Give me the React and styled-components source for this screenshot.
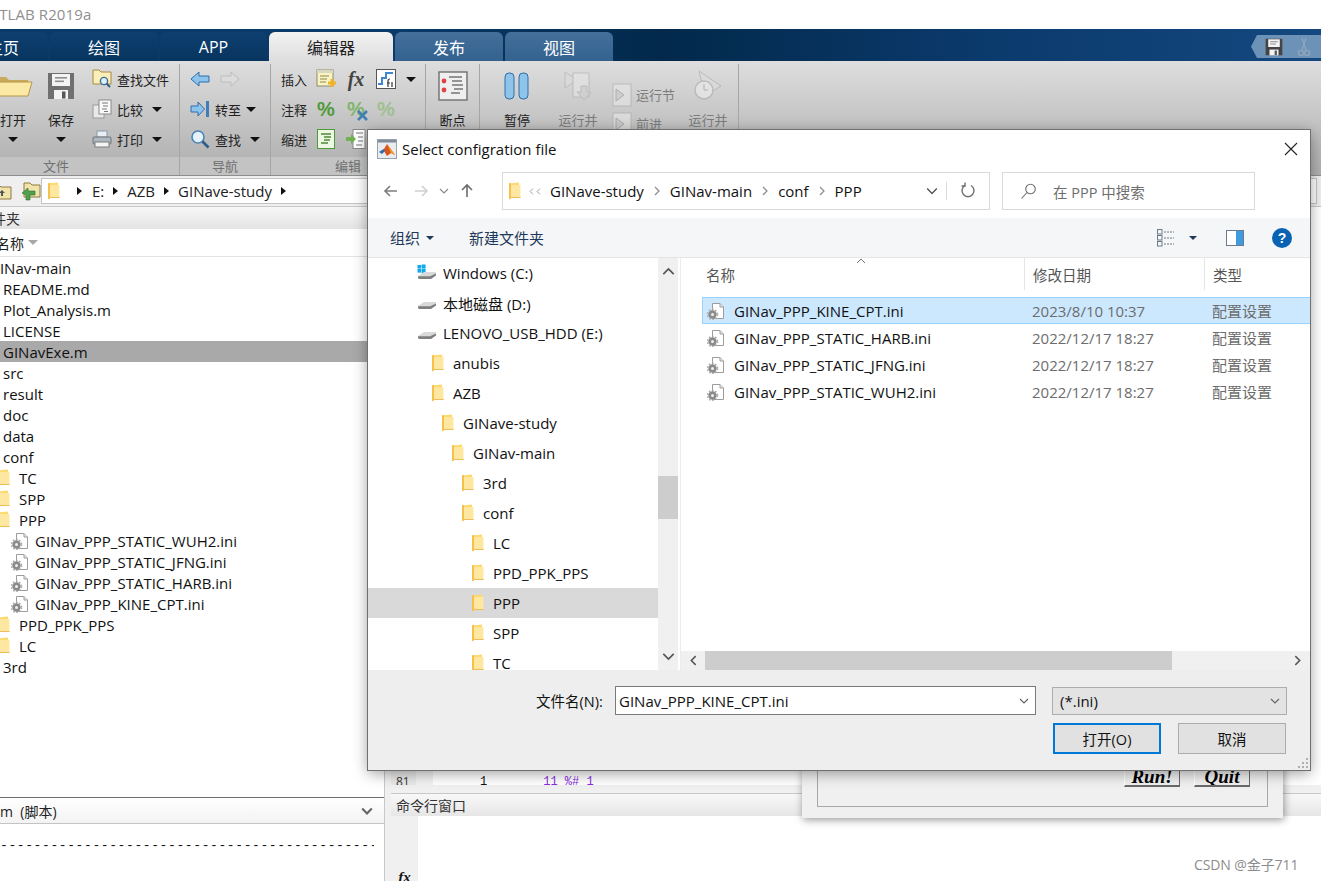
import React from "react";
import styled, { createGlobalStyle } from "styled-components";

const GlobalStyle = createGlobalStyle`
  html, body { margin: 0; padding: 0; background: #fff; }
  body { font-family: "Open Sans", "Noto Sans CJK SC", sans-serif; }
  * { box-sizing: border-box; }
`;

const Page = styled.div`
  position: relative;
  width: 1321px;
  height: 881px;
  overflow: hidden;
  display: flex;
  flex-direction: column;
  background: #fff;
  color: #111;
`;

/* ---------- matlab title + tabs ---------- */
const TitleBar = styled.div`
  height: 29px;
  flex: none;
  background: #fff;
  color: #8f8f8f;
  font-size: 15px;
  line-height: 29px;
  white-space: nowrap;
  overflow: hidden;
`;
const TitleText = styled.span`
  display: inline-block;
  margin-left: -24px;
  letter-spacing: 0.1px;
`;

const TabBar = styled.div`
  height: 32px;
  flex: none;
  display: flex;
  align-items: flex-end;
  gap: 2px;
  background: linear-gradient(90deg, #0a3a69 0%, #0a3a69 30%, #02294b 50%, #0b3a6d 75%, #14487f 100%);
  position: relative;
`;
const Tab = styled.div`
  width: ${(p) => p.$w}px;
  margin-left: ${(p) => p.$ml || 0}px;
  height: 29px;
  border-radius: 6px 6px 0 0;
  display: flex;
  align-items: center;
  justify-content: center;
  font-size: 16px;
  color: ${(p) => (p.$active ? "#222" : "#fff")};
  background: ${(p) =>
    p.$active
      ? "linear-gradient(#f2f2f2, #dedede)"
      : p.$light
      ? "linear-gradient(#44709a, #33628f)"
      : "linear-gradient(#0d3f70, #08355f)"};
  white-space: nowrap;
`;
const QuickAccess = styled.div`
  position: absolute;
  right: 0;
  top: 6px;
  width: 70px;
  height: 23px;
  display: flex;
  align-items: center;
  gap: 14px;
  padding-left: 14px;
  background: #6d92b8;
  clip-path: polygon(6px 0, 100% 0, 100% 100%, 6px 100%, 0 50%);
`;

/* ---------- ribbon ---------- */
const Ribbon = styled.div`
  height: 115px;
  flex: none;
  display: flex;
  background: linear-gradient(#dedede, #b4b4b4 85%, #b0b0b0);
  border-bottom: 1px solid #8e8e8e;
  font-size: 13px;
  color: #222;
`;
const Group = styled.div`
  width: ${(p) => p.$w}px;
  margin-left: ${(p) => p.$ml || 0}px;
  flex: none;
  display: flex;
  flex-direction: column;
  margin-top: 3px;
  border-right: 1px solid #a6a6a6;
`;
const GroupBody = styled.div`
  height: 93px;
  display: flex;
  padding-left: ${(p) => p.$pl || 0}px;
`;
const GroupLabel = styled.div`
  height: 18px;
  line-height: 18px;
  text-align: center;
  color: #707070;
  font-size: 13px;
  background: #c3c3c3;
`;
const TallButton = styled.div`
  width: ${(p) => p.$w}px;
  margin-left: ${(p) => p.$ml || 0}px;
  flex: none;
  display: flex;
  flex-direction: column;
  align-items: center;
  padding-top: 6px;
  color: ${(p) => (p.$off ? "#7c7c7c" : "#222")};
`;
const TallIcon = styled.div`
  height: 32px;
  display: flex;
  align-items: center;
`;
const TallLabel = styled.div`
  margin-top: 8px;
  line-height: 20px;
  white-space: nowrap;
`;
const Caret = styled.span`
  display: inline-block;
  width: 0;
  height: 0;
  flex: none;
  margin-left: ${(p) => p.$ml || 0}px;
  margin-top: ${(p) => p.$mt || 0}px;
  border-left: 5px solid transparent;
  border-right: 5px solid transparent;
  border-top: 5px solid ${(p) => p.$color || "#111"};
`;
const RowStack = styled.div`
  margin-left: ${(p) => p.$ml || 0}px;
  padding-top: ${(p) => p.$pt || 0}px;
  display: grid;
  grid-auto-rows: ${(p) => p.$row || 30}px;
  flex: none;
`;
const RibbonRow = styled.div`
  display: flex;
  align-items: center;
  gap: ${(p) => p.$gap || 5}px;
  white-space: nowrap;
  color: ${(p) => (p.$off ? "#7c7c7c" : "#222")};
`;
const EditGrid = styled.div`
  padding-top: 0;
  display: grid;
  grid-template-columns: 25px 20px 20px 20px 10px;
  grid-auto-rows: 30px;
  column-gap: 10px;
  align-items: center;
  justify-items: center;
  & > span:first-child, & > .lead { justify-self: start; }
`;
const EditLabel = styled.span`
  justify-self: start;
  white-space: nowrap;
`;

/* ---------- address bar ---------- */
const AddressBar = styled.div`
  height: 31px;
  flex: none;
  display: flex;
  align-items: center;
  background: #efefef;
  border-bottom: 1px solid #c8c8c8;
  padding-right: 4px;
`;
const AddressIcons = styled.div`
  width: 49px;
  display: flex;
  align-items: center;
  gap: 9px;
  margin-left: -8px;
  flex: none;
`;
const AddressField = styled.div`
  flex: 1;
  height: 26px;
  background: #fff;
  border: 1px solid #c4c4c4;
  display: flex;
  align-items: center;
  padding-left: 5px;
  font-size: 15px;
  color: #222;
`;
const CrumbArrow = styled.span`
  width: 0;
  height: 0;
  flex: none;
  margin: ${(p) => p.$m || "0 9px"};
  border-top: 4.5px solid transparent;
  border-bottom: 4.5px solid transparent;
  border-left: 5px solid #111;
`;

/* ---------- workspace ---------- */
const Workspace = styled.div`
  flex: 1;
  display: flex;
  min-height: 0;
`;
const LeftColumn = styled.div`
  width: 385px;
  flex: none;
  display: flex;
  flex-direction: column;
  border-right: 1px solid #c8c8c8;
`;
const PaneHeader = styled.div`
  height: 22px;
  flex: none;
  display: flex;
  align-items: center;
  justify-content: space-between;
  padding-right: 12px;
  background: linear-gradient(#f7f7f7, #e4e4e4);
  font-size: 14px;
  color: #333;
  overflow: hidden;
  white-space: nowrap;
`;
const ClippedTitle = styled.span`
  margin-left: ${(p) => p.$ml}px;
`;
const ColumnHead = styled.div`
  height: 28px;
  flex: none;
  display: flex;
  align-items: center;
  gap: 4px;
  background: #fff;
  border-bottom: 1px solid #e3e3e3;
  font-size: 14px;
  color: #222;
  overflow: hidden;
  white-space: nowrap;
`;
const FileList = styled.div`
  flex: 1;
  overflow: hidden;
  background: #fff;
`;
const FileRow = styled.div`
  height: 21px;
  display: flex;
  align-items: center;
  gap: ${(p) => p.$gap || 0}px;
  padding-left: ${(p) => p.$pl || 0}px;
  font-size: 15px;
  white-space: nowrap;
  letter-spacing: ${(p) => (p.$gap ? "0" : "0")};
  background: ${(p) => (p.$selected ? "#a9a9a9" : "transparent")};
  color: #111;
`;
const DetailPane = styled.div`
  height: 84px;
  flex: none;
  display: flex;
  flex-direction: column;
  border-top: 1px solid #6e6e6e;
  background: #fff;
`;
const DetailHead = styled.div`
  height: 26px;
  flex: none;
  display: flex;
  align-items: center;
  justify-content: space-between;
  padding-right: 11px;
  background: linear-gradient(#fff, #f3f3f3);
  border-bottom: 1px solid #c4c4c4;
  font-size: 14px;
  white-space: nowrap;
  overflow: hidden;
  color: #222;
`;
const DashLine = styled.div`
  margin-top: 13px;
  width: 374px;
  overflow: hidden;
  white-space: nowrap;
  font-size: 13px;
  line-height: 18px;
  letter-spacing: 0.6px;
  font-family: "Liberation Mono", monospace;
`;

const RightColumn = styled.div`
  flex: 1;
  display: flex;
  flex-direction: column;
  min-width: 0;
  padding-left: 6px;
  background: #f0f0f0;
`;
const Editor = styled.div`
  flex: 1;
  min-height: 0;
  display: flex;
  background: #fff;
  border-bottom: 8px solid #f0f0f0;
  overflow: hidden;
`;
const EditorLineNos = styled.div`
  width: 25px;
  flex: none;
  background: #e8e8e8;
  display: flex;
  flex-direction: column;
  justify-content: flex-end;
  padding-left: 5px;
  font-size: 12px;
  line-height: 6px;
  color: #333;
  overflow: hidden;
`;
const EditorFold = styled.div`
  width: 17px;
  flex: none;
  background: #f2f2f2;
`;
const EditorCode = styled.div`
  flex: 1;
  display: flex;
  align-items: flex-end;
  font-family: "Liberation Mono", monospace;
  font-size: 12px;
  line-height: 6px;
  overflow: hidden;
  padding-left: 47px;
  gap: 56px;
`;
const CodeTail = styled.span`
  color: #8a2be2;
`;
const CommandWindow = styled.div`
  height: 88px;
  flex: none;
  display: flex;
  flex-direction: column;
  background: #fff;
  border-top: 1px solid #c8c8c8;
`;
const CommandHead = styled.div`
  height: 22px;
  flex: none;
  display: flex;
  align-items: center;
  padding-left: 5px;
  font-size: 14px;
  color: #333;
  background: linear-gradient(#f8f8f8, #e6e6e6);
`;
const CommandBody = styled.div`
  flex: 1;
  display: flex;
`;
const CommandGutter = styled.div`
  width: 27px;
  background: #f0f0f0;
  display: flex;
  align-items: flex-end;
  justify-content: center;
  font-family: "Liberation Serif", serif;
  font-style: italic;
  font-weight: 700;
  font-size: 15px;
  line-height: 8px;
  overflow: hidden;
`;

/* ---------- figure window behind the dialog ---------- */
const FigureWindow = styled.div`
  position: absolute;
  left: 802px;
  top: 700px;
  width: 481px;
  height: 118px;
  background: #f0f0f0;
  box-shadow: 1px 2px 8px rgba(0, 0, 0, 0.4);
  padding: 0 15px 11px;
  display: flex;
`;
const FigurePanel = styled.div`
  flex: 1;
  border: 1px solid #a8a8a8;
  border-top: none;
  display: flex;
  align-items: flex-end;
  justify-content: flex-end;
  gap: 14px;
  padding: 0 17px 19px 0;
`;
const FigureButton = styled.div`
  width: 56px;
  height: 26px;
  background: #f0f0f0;
  border: 1px solid #fff;
  border-right-color: #696969;
  border-bottom: 2px solid #696969;
  font-family: "Liberation Serif", serif;
  font-weight: 700;
  font-style: italic;
  font-size: 19px;
  line-height: 30px;
  text-align: center;
  color: #000;
  overflow: hidden;
`;

/* ---------- file dialog ---------- */
const Dialog = styled.div`
  position: absolute;
  left: 368px;
  top: 130px;
  width: 942px;
  height: 640px;
  background: #fff;
  box-shadow: 0 0 0 1px #6f6f6f, 0 3px 14px rgba(0, 0, 0, 0.4);
  display: flex;
  flex-direction: column;
  z-index: 5;
`;
const DialogTitle = styled.div`
  height: 38px;
  flex: none;
  display: flex;
  align-items: center;
  padding: 0 12px 0 9px;
  gap: 5px;
  font-size: 15px;
  color: #111;
`;
const DialogTitleText = styled.div`
  flex: 1;
`;
const NavBar = styled.div`
  height: 50px;
  flex: none;
  display: flex;
  align-items: flex-start;
  padding-top: 4px;
`;
const NavIcons = styled.div`
  width: 134px;
  height: 38px;
  flex: none;
  display: flex;
  align-items: center;
  padding-left: 15px;
`;
const PathBox = styled.div`
  width: 488px;
  height: 38px;
  flex: none;
  display: flex;
  align-items: center;
  border: 1px solid #d9d9d9;
  font-size: 15px;
  color: #111;
`;
const PathCrumbs = styled.div`
  flex: 1;
  display: flex;
  align-items: center;
  padding-left: 5px;
  white-space: nowrap;
`;
const PathSep = styled.span`
  margin: ${(p) => p.$m || "0 8px"};
  display: inline-flex;
`;
const PathEnd = styled.div`
  width: 43px;
  height: 100%;
  border-left: 1px solid #d9d9d9;
  display: flex;
  align-items: center;
  justify-content: center;
  flex: none;
`;
const SearchBox = styled.div`
  margin-left: 12px;
  width: 253px;
  height: 38px;
  flex: none;
  display: flex;
  align-items: center;
  gap: 16px;
  padding-left: 17px;
  border: 1px solid #d9d9d9;
  font-size: 14.5px;
  color: #6d6d6d;
`;
const ToolBar = styled.div`
  height: 40px;
  flex: none;
  display: flex;
  align-items: center;
  background: #f5f6f7;
  border-bottom: 1px solid #e5e5e5;
  padding-left: 22px;
  font-size: 15px;
  color: #1e395b;
`;
const ToolAction = styled.div`
  display: flex;
  align-items: center;
  gap: 6px;
  margin-right: ${(p) => p.$mr || 0}px;
  white-space: nowrap;
`;
const ToolRight = styled.div`
  margin-left: auto;
  display: flex;
  align-items: center;
  padding-right: 18px;
`;
const DialogBody = styled.div`
  height: 412px;
  flex: none;
  display: flex;
`;
const TreePane = styled.div`
  width: 310px;
  flex: none;
  display: flex;
`;
const TreeRows = styled.div`
  width: 290px;
  flex: none;
  overflow: hidden;
`;
const TreeRow = styled.div`
  height: 30px;
  display: flex;
  align-items: center;
  gap: ${(p) => p.$gap || 9}px;
  padding-left: ${(p) => p.$pl}px;
  font-size: 15px;
  white-space: nowrap;
  background: ${(p) => (p.$selected ? "#d9d9d9" : "transparent")};
  color: #111;
`;
const VScroll = styled.div`
  width: 20px;
  flex: none;
  background: #f0f0f0;
  display: flex;
  flex-direction: column;
  align-items: center;
  justify-content: space-between;
  position: relative;
  padding: 7px 0;
`;
const VThumb = styled.div`
  position: absolute;
  top: 218px;
  left: 0;
  width: 20px;
  height: 43px;
  background: #cdcdcd;
`;
const ListPane = styled.div`
  flex: 1;
  display: flex;
  flex-direction: column;
  border-left: 1px solid #ececec;
  margin-left: 2px;
  min-width: 0;
`;
const ListHead = styled.div`
  height: 32px;
  flex: none;
  display: grid;
  grid-template-columns: 343px 180px 1fr;
  font-size: 14.5px;
  color: #555;
  position: relative;
`;
const HeadCell = styled.div`
  display: flex;
  align-items: center;
  padding-left: ${(p) => p.$pl || 8}px;
  border-left: ${(p) => (p.$first ? "none" : "1px solid #e5e5e5")};
`;
const SortMark = styled.svg`
  position: absolute;
  left: 175px;
  top: 0;
`;
const ListRows = styled.div`
  flex: 1;
  padding: 7px 0 0 21px;
  overflow: hidden;
`;
const ListRow = styled.div`
  height: 27px;
  display: grid;
  grid-template-columns: 321px 180px 1fr;
  align-items: center;
  font-size: 15px;
  background: ${(p) => (p.$selected ? "#cce8ff" : "transparent")};
  border: 1px solid ${(p) => (p.$selected ? "#99d1ff" : "transparent")};
  border-right: none;
  white-space: nowrap;
`;
const NameCell = styled.div`
  display: flex;
  align-items: center;
  gap: 9px;
  padding-left: 4px;
  color: #111;
`;
const DimCell = styled.div`
  padding-left: 8px;
  color: #6d6d6d;
`;
const HScroll = styled.div`
  height: 19px;
  flex: none;
  background: #f0f0f0;
  display: flex;
  align-items: center;
  justify-content: space-between;
  padding: 0 7px;
  position: relative;
`;
const HThumb = styled.div`
  position: absolute;
  left: 24px;
  top: 0;
  width: 467px;
  height: 19px;
  background: #cdcdcd;
`;
const Footer = styled.div`
  flex: 1;
  background: #eeeeee;
  display: flex;
  flex-direction: column;
  padding-top: 16px;
  position: relative;
`;
const FooterRow = styled.div`
  display: flex;
  align-items: center;
  height: 29px;
  font-size: 14.5px;
`;
const FooterLabel = styled.div`
  margin-left: 168px;
  width: 79px;
  white-space: nowrap;
`;
const NameInput = styled.div`
  width: 421px;
  height: 29px;
  background: #fff;
  border: 1px solid #7a7a7a;
  display: flex;
  align-items: center;
  justify-content: space-between;
  padding: 0 6px 0 3px;
  font-size: 15px;
`;
const TypeSelect = styled.div`
  margin-left: 16px;
  width: 235px;
  height: 28px;
  background: #e3e3e3;
  border: 1px solid #adadad;
  display: flex;
  align-items: center;
  justify-content: space-between;
  padding: 0 6px 0 7px;
  font-size: 15px;
`;
const ButtonRow = styled.div`
  margin-top: 8px;
  display: flex;
  gap: 17px;
  padding-left: 685px;
`;
const DialogButton = styled.div`
  width: 108px;
  height: 31px;
  background: #e1e1e1;
  border: ${(p) => (p.$primary ? "2px solid #0078d7" : "1px solid #adadad")};
  display: flex;
  align-items: center;
  justify-content: center;
  font-size: 14.5px;
  color: #111;
`;
const Grip = styled.svg`
  position: absolute;
  right: 1px;
  bottom: 1px;
`;
const Watermark = styled.div`
  position: absolute;
  left: 1194px;
  top: 856px;
  font-size: 14px;
  line-height: 18px;
  color: #8c8c8c;
  letter-spacing: -0.1px;
  z-index: 6;
`;

/* ---------- drawn icons ---------- */
const TreeFolder = () => (
  <svg width="13" height="18" viewBox="0 0 13 18">
    <path d="M1 1.5 L11 0.5 V15 H1 Z" fill="#fdd96f" />
    <path d="M1 1.5 L3 0.8 V16.5 L1 17.5 Z" fill="#f6c14a" />
    <path d="M3 3 H12.5 V16 H3 Z" fill="#fee7a0" />
    <path d="M3 16 H12.5 V15 H3 Z" fill="#eebf58" />
  </svg>
);
const Clip = styled.span`
  display: inline-flex;
  margin-left: ${(p) => p.$ml}px;
  flex: none;
`;
const IniIcon = () => (
  <svg width="18" height="18" viewBox="0 0 18 18">
    <path d="M5.5 1.5 H13 L16.5 5 V16.5 H5.5 Z" fill="#fff" stroke="#9c9c9c" />
    <path d="M13 1.5 V5 H16.5" fill="#e8e8e8" stroke="#9c9c9c" />
    <circle cx="5.5" cy="12.5" r="4.2" fill="#8b8b8b" />
    <circle cx="5.5" cy="12.5" r="5" fill="none" stroke="#a8a8a8" strokeWidth="1.6" strokeDasharray="1.6 1.6" />
    <circle cx="5.5" cy="12.5" r="1.5" fill="#efefef" />
  </svg>
);
const DriveIcon = ({ windows }) => (
  <svg width="20" height="18" viewBox="0 0 20 18">
    {windows && (
      <g fill="#12a8ee">
        <rect x="0.5" y="1" width="3.6" height="3.6" />
        <rect x="4.6" y="0.5" width="4" height="4.1" />
        <rect x="0.5" y="5" width="3.6" height="3.6" />
        <rect x="4.6" y="5" width="4" height="4.1" />
      </g>
    )}
    <path d="M1 12 L7 8 H19 V11 L14 14.5 H2 Z" fill="#d9d9d9" />
    <path d="M1 12.2 H13 L19 9.5 V11.5 L14 15 H2 L1 14 Z" fill="#7f7f7f" />
  </svg>
);
const BigFolder = () => (
  <svg width="42" height="24" viewBox="0 0 42 24">
    <path d="M1 3 H14 L17 6 H36 V22 H1 Z" fill="#c9a95a" />
    <path d="M3 8 H40 L36 22 H1 Z" fill="#fbe9a6" stroke="#b79749" />
  </svg>
);
const SaveIcon = ({ size = 28, body = "#707070" }) => (
  <svg width={size} height={size} viewBox="0 0 28 28">
    <path d="M1 1 H27 V27 H1 Z" fill={body} />
    <rect x="5" y="2" width="18" height="12" fill="#f3f3f3" />
    <rect x="8" y="5" width="12" height="1.6" fill="#8f8f8f" />
    <rect x="8" y="8.5" width="9" height="1.6" fill="#8f8f8f" />
    <rect x="7" y="18" width="14" height="9" fill="#f3f3f3" />
    <rect x="15" y="19.5" width="3.5" height="7" fill="#555" />
  </svg>
);
const FindFileIcon = () => (
  <svg width="20" height="20" viewBox="0 0 20 20">
    <path d="M1 1 H7 L9 3 H19 V15 H1 Z" fill="#fbeeb8" stroke="#a8893f" />
    <circle cx="12" cy="12" r="3.6" fill="#dff0fb" stroke="#3a6d98" strokeWidth="1.4" />
    <path d="M14.6 14.6 L18 18" stroke="#2f5d85" strokeWidth="2" />
  </svg>
);
const CompareIcon = () => (
  <svg width="20" height="20" viewBox="0 0 20 20">
    <rect x="1" y="6" width="11" height="13" fill="#e9e9e9" stroke="#9a9a9a" />
    <rect x="7" y="1" width="12" height="14" fill="#fafafa" stroke="#8a8a8a" />
    <path d="M10 4 H16 M11 7 H16 M10 10 H15 M12 12.5 H16" stroke="#777" strokeWidth="1.1" />
  </svg>
);
const PrintIcon = () => (
  <svg width="20" height="18" viewBox="0 0 20 18">
    <rect x="5" y="1" width="10" height="6" fill="#e7eef5" stroke="#8e9aa6" />
    <rect x="1" y="7" width="18" height="7" rx="1" fill="#aeb6be" stroke="#6e757c" />
    <rect x="3" y="12" width="14" height="5" fill="#f4f4f4" stroke="#7d7d7d" />
  </svg>
);
const BlockArrow = ({ flip, color = "#8cc4ee", edge = "#2f6fa8" }) => (
  <svg width="20" height="16" viewBox="0 0 20 16" style={flip ? { transform: "scaleX(-1)" } : undefined}>
    <path d="M1 8 L9 1 V5 H19 V11 H9 V15 Z" fill={color} stroke={edge} />
  </svg>
);
const GotoIcon = () => (
  <svg width="20" height="18" viewBox="0 0 20 18">
    <path d="M1 6 H8 V2 L14.5 9 L8 16 V12 H1 Z" fill="#8cc4ee" stroke="#2f6fa8" />
    <rect x="16" y="1" width="3" height="16" fill="#3f7fb6" />
  </svg>
);
const LensIcon = () => (
  <svg width="20" height="20" viewBox="0 0 20 20">
    <circle cx="8" cy="8" r="6" fill="#e5f2fb" stroke="#4a85b5" strokeWidth="1.6" />
    <path d="M12.5 12.5 L18.5 18.5" stroke="#2f5d85" strokeWidth="2.6" />
  </svg>
);
const InsertIcon = () => (
  <svg width="20" height="20" viewBox="0 0 20 20">
    <rect x="1" y="1" width="16" height="16" fill="#fbf3c4" stroke="#8c8c6c" />
    <rect x="1" y="1" width="16" height="3" fill="#d8d8c0" />
    <path d="M4 7 H13 M4 10 H11 M4 13 H10" stroke="#8a8a4a" strokeWidth="1.2" />
    <path d="M16 10 V18 M12 14 H20" stroke="#f0b429" strokeWidth="3" />
  </svg>
);
const FxGlyph = styled.span`
  font-family: "Liberation Serif", serif;
  font-style: italic;
  font-weight: 700;
  font-size: 20px;
  color: #444;
  line-height: 20px;
`;
const FiIcon = () => (
  <svg width="20" height="20" viewBox="0 0 20 20">
    <rect x="0.5" y="0.5" width="19" height="19" fill="#fff" stroke="#555" />
    <path d="M2 15 H6 V9 H10 V4 H17" fill="none" stroke="#3f87d0" strokeWidth="2" />
    <path d="M12 18 V12 Q12 10 14 10 M11 14 H14 M16 13 V18" fill="none" stroke="#333" strokeWidth="1.2" />
  </svg>
);
const PercentGlyph = styled.span`
  font-family: "Liberation Sans", sans-serif;
  font-weight: 700;
  font-size: 20px;
  line-height: 20px;
  color: ${(p) => p.$color || "#4f9a3a"};
  position: relative;
  display: inline-block;
`;
const PercentBadge = styled.svg`
  position: absolute;
  right: -3px;
  bottom: -2px;
`;
const IndentIcon = () => (
  <svg width="18" height="20" viewBox="0 0 18 20">
    <rect x="0.5" y="0.5" width="17" height="19" fill="#eef7e4" stroke="#4f9a3a" />
    <path d="M4 5 H14 M7 8 H14 M7 11 H13 M4 14 H11" stroke="#4f8a35" strokeWidth="1.3" />
  </svg>
);
const IndentMoreIcon = () => (
  <svg width="20" height="20" viewBox="0 0 20 20">
    <rect x="7" y="0.5" width="12" height="19" fill="#fff" stroke="#888" />
    <path d="M10 4 H17 M12 8 H17 M12 12 H17 M10 16 H16" stroke="#777" strokeWidth="1.2" />
    <path d="M0 8 H5 V5 L10 10 L5 15 V12 H0 Z" fill="#6fb24f" />
  </svg>
);
const BreakIcon = () => (
  <svg width="30" height="30" viewBox="0 0 30 30">
    <rect x="1" y="1" width="28" height="28" fill="#efefef" stroke="#6f6f6f" strokeWidth="1.4" />
    <circle cx="6" cy="10" r="2.4" fill="#d44" />
    <circle cx="6" cy="19" r="2.4" fill="#d44" />
    <path d="M11 6 H24 M14 10 H24 M14 14 H25 M16 18 H25 M13 22 H22" stroke="#777" strokeWidth="1.4" />
  </svg>
);
const PauseIcon = () => (
  <svg width="26" height="28" viewBox="0 0 26 28">
    <rect x="1" y="1" width="9" height="26" rx="4" fill="#8ec4ea" stroke="#2f6fa8" />
    <rect x="15" y="1" width="9" height="26" rx="4" fill="#8ec4ea" stroke="#2f6fa8" />
  </svg>
);
const RunAdvanceIcon = () => (
  <svg width="30" height="32" viewBox="0 0 30 32" opacity="0.55">
    <path d="M2 2 L14 10 L2 18 Z" fill="#ddd" stroke="#aaa" />
    <rect x="10" y="3" width="16" height="24" fill="#e8e8e8" stroke="#aaa" />
    <path d="M18 16 H24 V22 H28 L21 30 L14 22 H18 Z" fill="#cfcfcf" stroke="#aaa" />
  </svg>
);
const RunSectionIcon = () => (
  <svg width="20" height="24" viewBox="0 0 20 24" opacity="0.6">
    <rect x="1" y="1" width="18" height="22" fill="#e8e8e8" stroke="#aaa" />
    <path d="M4 6 L12 12 L4 18 Z" fill="#ccc" stroke="#999" />
  </svg>
);
const RunTimeIcon = () => (
  <svg width="30" height="32" viewBox="0 0 30 32" opacity="0.6">
    <path d="M6 1 L28 16 L12 26 Z" fill="#ddd" stroke="#aaa" />
    <circle cx="11" cy="20" r="9" fill="#eee" stroke="#aaa" strokeWidth="1.4" />
    <path d="M11 14 V20 H15" stroke="#999" fill="none" />
  </svg>
);
const UpFolderIcon = () => (
  <svg width="20" height="18" viewBox="0 0 20 18">
    <path d="M1 3 H7 L9 5 H19 V17 H1 Z" fill="#f1e3ac" stroke="#8f7a3f" />
    <path d="M10 8 L13 11 H11 V14 H9 V11 H7 Z" fill="#555" />
  </svg>
);
const BackFolderIcon = () => (
  <svg width="20" height="20" viewBox="0 0 20 20">
    <path d="M3 2 H9 L11 4 H19 V16 H3 Z" fill="#f1e3ac" stroke="#8f7a3f" />
    <path d="M1 12 L7 7 V10 H14 V14 H9 V19 H5 V14 Z" fill="#4fa04f" stroke="#2e6e2e" strokeWidth="0.6" />
  </svg>
);
const ScissorIcon = () => (
  <svg width="14" height="20" viewBox="0 0 14 20" fill="none" stroke="#8fa6bd" strokeWidth="1.3">
    <path d="M9 1 L5 13 M5 1 L9 13" />
    <circle cx="4" cy="16" r="2.6" />
    <circle cx="10" cy="16" r="2.6" />
  </svg>
);
const ArrowGlyph = ({ dir = "left", color = "#7d7d7d", size = 16 }) => {
  const d = {
    left: "M14 8 H2 M7 3 L2 8 L7 13",
    right: "M2 8 H14 M9 3 L14 8 L9 13",
    up: "M8 14 V2 M3 7 L8 2 L13 7",
  }[dir];
  return (
    <svg width={size} height={size} viewBox="0 0 16 16" fill="none" stroke={color} strokeWidth="1.6">
      <path d={d} />
    </svg>
  );
};
const Chevron = ({ dir = "down", color = "#555", size = 10, weight = 1.2 }) => {
  const d = {
    down: "M1 3 L5 7 L9 3",
    up: "M1 7 L5 3 L9 7",
    left: "M7 1 L3 5 L7 9",
    right: "M3 1 L7 5 L3 9",
  }[dir];
  return (
    <svg width={size} height={size} viewBox="0 0 10 10" fill="none" stroke={color} strokeWidth={weight}>
      <path d={d} />
    </svg>
  );
};
const MatlabLogo = () => (
  <svg width="20" height="20" viewBox="0 0 20 20">
    <rect x="0.5" y="0.5" width="19" height="19" fill="#e9edf2" stroke="#9aa2ab" />
    <rect x="1" y="1" width="18" height="2.5" fill="#7f8b99" />
    <path d="M2 13 L7 10 L10 5 L13 9 L18 16 L14 14 L10 17 L7 12 Z" fill="#d9541e" />
    <path d="M2 13 L7 10 L8 12 L5 15 Z" fill="#2a6fb0" />
    <path d="M10 5 L13 9 L18 16 L14 14 Z" fill="#f0a020" />
  </svg>
);
const RefreshIcon = () => (
  <svg width="16" height="18" viewBox="0 0 16 18" fill="none" stroke="#6d6d6d" strokeWidth="1.4">
    <path d="M5 3.5 A6 6 0 1 0 11 3.5" />
    <path d="M5 0.5 V4 H1.5" />
  </svg>
);
const SearchGlyph = () => (
  <svg width="17" height="17" viewBox="0 0 17 17" fill="none" stroke="#6d6d6d" strokeWidth="1.1">
    <circle cx="10.5" cy="6" r="4.8" />
    <path d="M7 9.5 L1.5 15.5" />
  </svg>
);
const ViewIcon = () => (
  <svg width="18" height="18" viewBox="0 0 18 18" fill="none" stroke="#6b7a8c">
    <rect x="0.5" y="0.5" width="4.5" height="4.5" />
    <rect x="0.5" y="6.5" width="4.5" height="4.5" />
    <rect x="0.5" y="12.5" width="4.5" height="4.5" />
    <path d="M7 3 H17 M7 9 H17 M7 15 H17" strokeDasharray="2 1" />
  </svg>
);
const PreviewIcon = () => (
  <svg width="18" height="16" viewBox="0 0 18 16">
    <rect x="0.5" y="0.5" width="17" height="15" fill="#fff" stroke="#6b7a8c" />
    <rect x="10" y="1" width="7" height="14" fill="#3f9be0" />
  </svg>
);
const HelpCircle = styled.div`
  width: 20px;
  height: 20px;
  border-radius: 50%;
  background: #0a62b4;
  color: #fff;
  font-size: 14px;
  font-weight: 700;
  display: flex;
  align-items: center;
  justify-content: center;
  font-family: "Liberation Sans", sans-serif;
`;
const SmallCaret = styled.span`
  width: 0;
  height: 0;
  display: inline-block;
  border-left: 4px solid transparent;
  border-right: 4px solid transparent;
  border-top: 4px solid ${(p) => p.$color || "#1e395b"};
  margin: ${(p) => p.$m || 0};
`;

const leftFiles = [
  { name: "GINav-main", pl: 0, shift: -11 },
  { name: "README.md", pl: 3 },
  { name: "Plot_Analysis.m", pl: 3 },
  { name: "LICENSE", pl: 3 },
  { name: "GINavExe.m", pl: 3, selected: true },
  { name: "src", pl: 3 },
  { name: "result", pl: 3 },
  { name: "doc", pl: 3 },
  { name: "data", pl: 3 },
  { name: "conf", pl: 3 },
  { name: "TC", folder: true },
  { name: "SPP", folder: true },
  { name: "PPP", folder: true },
  { name: "GINav_PPP_STATIC_WUH2.ini", ini: true },
  { name: "GINav_PPP_STATIC_JFNG.ini", ini: true },
  { name: "GINav_PPP_STATIC_HARB.ini", ini: true },
  { name: "GINav_PPP_KINE_CPT.ini", ini: true },
  { name: "PPD_PPK_PPS", folder: true },
  { name: "LC", folder: true },
  { name: "3rd", pl: 3 },
];

const treeRows = [
  { name: "Windows (C:)", drive: "win", pl: 49 },
  { name: "本地磁盘 (D:)", drive: "disk", pl: 49 },
  { name: "LENOVO_USB_HDD (E:)", drive: "disk", pl: 49 },
  { name: "anubis", pl: 63 },
  { name: "AZB", pl: 63 },
  { name: "GINave-study", pl: 73 },
  { name: "GINav-main", pl: 83 },
  { name: "3rd", pl: 93 },
  { name: "conf", pl: 93 },
  { name: "LC", pl: 103 },
  { name: "PPD_PPK_PPS", pl: 103 },
  { name: "PPP", pl: 103, selected: true },
  { name: "SPP", pl: 103 },
  { name: "TC", pl: 103 },
];

const dialogFiles = [
  { name: "GINav_PPP_KINE_CPT.ini", date: "2023/8/10 10:37", selected: true },
  { name: "GINav_PPP_STATIC_HARB.ini", date: "2022/12/17 18:27" },
  { name: "GINav_PPP_STATIC_JFNG.ini", date: "2022/12/17 18:27" },
  { name: "GINav_PPP_STATIC_WUH2.ini", date: "2022/12/17 18:27" },
];

const App = () => {
  return (
    <Page>
      <GlobalStyle />
      <TitleBar>
        <TitleText>MATLAB R2019a</TitleText>
      </TitleBar>

      <TabBar>
        <Tab $w={90} $ml={-42}>
          主页
        </Tab>
        <Tab $w={108}>绘图</Tab>
        <Tab $w={107}>APP</Tab>
        <Tab $w={124} $active>
          编辑器
        </Tab>
        <Tab $w={108} $light>
          发布
        </Tab>
        <Tab $w={108} $light>
          视图
        </Tab>
        <QuickAccess>
          <SaveIcon size={18} body="#444" />
          <ScissorIcon />
        </QuickAccess>
      </TabBar>

      <Ribbon>
        <Group $w={247} $ml={-67}>
          <GroupBody $pl={53}>
            <TallButton $w={54}>
              <TallIcon>
                <BigFolder />
              </TallIcon>
              <TallLabel>打开</TallLabel>
              <Caret $mt={7} />
            </TallButton>
            <TallButton $w={42}>
              <TallIcon>
                <SaveIcon />
              </TallIcon>
              <TallLabel>保存</TallLabel>
              <Caret $mt={7} />
            </TallButton>
            <RowStack $ml={10}>
              <RibbonRow>
                <FindFileIcon />
                查找文件
              </RibbonRow>
              <RibbonRow>
                <CompareIcon />
                比较
                <Caret $ml={4} />
              </RibbonRow>
              <RibbonRow>
                <PrintIcon />
                打印
                <Caret $ml={4} />
              </RibbonRow>
            </RowStack>
          </GroupBody>
          <GroupLabel>文件</GroupLabel>
        </Group>

        <Group $w={91}>
          <GroupBody $pl={10}>
            <RowStack>
              <RibbonRow $gap={10}>
                <BlockArrow />
                <BlockArrow flip color="#dcdcdc" edge="#bcbcbc" />
              </RibbonRow>
              <RibbonRow>
                <GotoIcon />
                转至
                <Caret />
              </RibbonRow>
              <RibbonRow>
                <LensIcon />
                查找
                <Caret $ml={4} />
              </RibbonRow>
            </RowStack>
          </GroupBody>
          <GroupLabel>导航</GroupLabel>
        </Group>

        <Group $w={155}>
          <GroupBody $pl={10}>
            <EditGrid>
              <EditLabel>插入</EditLabel>
              <InsertIcon />
              <FxGlyph>fx</FxGlyph>
              <FiIcon />
              <Caret />
              <EditLabel>注释</EditLabel>
              <PercentGlyph>%</PercentGlyph>
              <PercentGlyph $color="#7fb56d">
                %
                <PercentBadge width="11" height="11" viewBox="0 0 11 11">
                  <path d="M1 1 L10 10 M10 1 L1 10" stroke="#3f7fb6" strokeWidth="2.6" />
                </PercentBadge>
              </PercentGlyph>
              <PercentGlyph $color="#9fbf8f">%</PercentGlyph>
              <span />
              <EditLabel>缩进</EditLabel>
              <IndentIcon />
              <IndentMoreIcon />
              <IndentMoreIcon />
            </EditGrid>
          </GroupBody>
          <GroupLabel>编辑</GroupLabel>
        </Group>

        <Group $w={54}>
          <GroupBody>
            <TallButton $w={53}>
              <TallIcon>
                <BreakIcon />
              </TallIcon>
              <TallLabel>断点</TallLabel>
            </TallButton>
          </GroupBody>
          <GroupLabel>断点</GroupLabel>
        </Group>

        <Group $w={259}>
          <GroupBody>
            <TallButton $w={50} $ml={12}>
              <TallIcon>
                <PauseIcon />
              </TallIcon>
              <TallLabel>暂停</TallLabel>
            </TallButton>
            <TallButton $w={50} $ml={11} $off>
              <TallIcon>
                <RunAdvanceIcon />
              </TallIcon>
              <TallLabel>运行并</TallLabel>
            </TallButton>
            <RowStack $ml={9} $pt={16} $row={29}>
              <RibbonRow $off $gap={4}>
                <RunSectionIcon />
                运行节
              </RibbonRow>
              <RibbonRow $off $gap={4}>
                <RunSectionIcon />
                前进
              </RibbonRow>
            </RowStack>
            <TallButton $w={50} $ml={8} $off>
              <TallIcon>
                <RunTimeIcon />
              </TallIcon>
              <TallLabel>运行并</TallLabel>
            </TallButton>
          </GroupBody>
          <GroupLabel>运行</GroupLabel>
        </Group>
      </Ribbon>

      <AddressBar>
        <AddressIcons>
          <UpFolderIcon />
          <BackFolderIcon />
        </AddressIcons>
        <AddressField>
          <TreeFolder />
          <CrumbArrow $m="0 10px 0 17px" />
          E:
          <CrumbArrow />
          AZB
          <CrumbArrow />
          GINave-study
          <CrumbArrow />
        </AddressField>
      </AddressBar>

      <Workspace>
        <LeftColumn>
          <PaneHeader>
            <ClippedTitle $ml={-22}>文件夹</ClippedTitle>
          </PaneHeader>
          <ColumnHead>
            <ClippedTitle $ml={-4}>名称</ClippedTitle>
            <Caret $color="#a8a8a8" />
          </ColumnHead>
          <FileList>
            {leftFiles.map((f) => {
              if (f.folder) {
                return (
                  <FileRow key={f.name} $gap={9}>
                    <Clip $ml={-3}>
                      <TreeFolder />
                    </Clip>
                    {f.name}
                  </FileRow>
                );
              }
              if (f.ini) {
                return (
                  <FileRow key={f.name} $gap={6} $pl={11}>
                    <IniIcon />
                    {f.name}
                  </FileRow>
                );
              }
              return (
                <FileRow key={f.name} $pl={f.pl} $selected={f.selected}>
                  {f.shift ? <ClippedTitle $ml={f.shift}>{f.name}</ClippedTitle> : f.name}
                </FileRow>
              );
            })}
          </FileList>
          <DetailPane>
            <DetailHead>
              <ClippedTitle $ml={-66}>GINavExe.m&nbsp;&nbsp;(脚本)</ClippedTitle>
              <Chevron color="#666" size={12} weight={1.8} />
            </DetailHead>
            <DashLine>{"-".repeat(60)}</DashLine>
          </DetailPane>
        </LeftColumn>

        <RightColumn>
          <Editor>
            <EditorLineNos>81</EditorLineNos>
            <EditorFold />
            <EditorCode>
              <span>1</span>
              <CodeTail>11 %# 1</CodeTail>
            </EditorCode>
          </Editor>
          <CommandWindow>
            <CommandHead>命令行窗口</CommandHead>
            <CommandBody>
              <CommandGutter>fx</CommandGutter>
            </CommandBody>
          </CommandWindow>
        </RightColumn>
      </Workspace>

      <FigureWindow>
        <FigurePanel>
          <FigureButton>Run!</FigureButton>
          <FigureButton>Quit</FigureButton>
        </FigurePanel>
      </FigureWindow>

      <Dialog>
        <DialogTitle>
          <MatlabLogo />
          <DialogTitleText>Select configration file</DialogTitleText>
          <svg width="14" height="14" viewBox="0 0 14 14" stroke="#222" strokeWidth="1.1">
            <path d="M1 1 L13 13 M13 1 L1 13" />
          </svg>
        </DialogTitle>

        <NavBar>
          <NavIcons>
            <ArrowGlyph />
            <Clip $ml={14}>
              <ArrowGlyph dir="right" color="#d0d0d0" />
            </Clip>
            <Clip $ml={10}>
              <Chevron color="#8a8a8a" size={10} />
            </Clip>
            <Clip $ml={10}>
              <ArrowGlyph dir="up" color="#6d6d6d" />
            </Clip>
          </NavIcons>
          <PathBox>
            <PathCrumbs>
              <TreeFolder />
              <PathSep $m="0 8px 0 7px">
                <Chevron dir="left" color="#8a8a8a" size={7} />
                <Chevron dir="left" color="#8a8a8a" size={7} />
              </PathSep>
              GINave-study
              <PathSep>
                <Chevron dir="right" color="#8a8a8a" size={10} />
              </PathSep>
              GINav-main
              <PathSep>
                <Chevron dir="right" color="#8a8a8a" size={10} />
              </PathSep>
              conf
              <PathSep>
                <Chevron dir="right" color="#8a8a8a" size={10} />
              </PathSep>
              PPP
            </PathCrumbs>
            <Chevron color="#555" size={12} />
            <Clip $ml={8}>
              <PathEnd>
                <RefreshIcon />
              </PathEnd>
            </Clip>
          </PathBox>
          <SearchBox>
            <SearchGlyph />在 PPP 中搜索
          </SearchBox>
        </NavBar>

        <ToolBar>
          <ToolAction $mr={35}>
            组织
            <SmallCaret />
          </ToolAction>
          <ToolAction>新建文件夹</ToolAction>
          <ToolRight>
            <ViewIcon />
            <SmallCaret $m="0 0 0 14px" />
            <Clip $ml={29}>
              <PreviewIcon />
            </Clip>
            <Clip $ml={28}>
              <HelpCircle>?</HelpCircle>
            </Clip>
          </ToolRight>
        </ToolBar>

        <DialogBody>
          <TreePane>
            <TreeRows>
              {treeRows.map((r) => (
                <TreeRow key={r.name} $pl={r.pl} $selected={r.selected} $gap={r.drive ? 6 : 9}>
                  {r.drive ? <DriveIcon windows={r.drive === "win"} /> : <TreeFolder />}
                  {r.name}
                </TreeRow>
              ))}
            </TreeRows>
            <VScroll>
              <Chevron dir="up" color="#555" size={13} weight={1.3} />
              <VThumb />
              <Chevron color="#555" size={13} weight={1.3} />
            </VScroll>
          </TreePane>
          <ListPane>
            <ListHead>
              <HeadCell $first $pl={25}>
                名称
              </HeadCell>
              <HeadCell>修改日期</HeadCell>
              <HeadCell>类型</HeadCell>
              <SortMark width="10" height="6" viewBox="0 0 10 6" fill="none" stroke="#777">
                <path d="M1 5 L5 1 L9 5" />
              </SortMark>
            </ListHead>
            <ListRows>
              {dialogFiles.map((f) => (
                <ListRow key={f.name} $selected={f.selected}>
                  <NameCell>
                    <IniIcon />
                    {f.name}
                  </NameCell>
                  <DimCell>{f.date}</DimCell>
                  <DimCell>配置设置</DimCell>
                </ListRow>
              ))}
            </ListRows>
            <HScroll>
              <Chevron dir="left" color="#555" size={11} weight={1.4} />
              <HThumb />
              <Chevron dir="right" color="#555" size={11} weight={1.4} />
            </HScroll>
          </ListPane>
        </DialogBody>

        <Footer>
          <FooterRow>
            <FooterLabel>文件名(N):</FooterLabel>
            <NameInput>
              GINav_PPP_KINE_CPT.ini
              <Chevron color="#666" size={10} />
            </NameInput>
            <TypeSelect>
              (*.ini)
              <Chevron color="#666" size={10} />
            </TypeSelect>
          </FooterRow>
          <ButtonRow>
            <DialogButton $primary>打开(O)</DialogButton>
            <DialogButton>取消</DialogButton>
          </ButtonRow>
          <Grip width="12" height="12" viewBox="0 0 12 12" fill="#b0b0b0">
            <rect x="9" y="1" width="2" height="2" />
            <rect x="5" y="5" width="2" height="2" />
            <rect x="9" y="5" width="2" height="2" />
            <rect x="1" y="9" width="2" height="2" />
            <rect x="5" y="9" width="2" height="2" />
            <rect x="9" y="9" width="2" height="2" />
          </Grip>
        </Footer>
      </Dialog>

      <Watermark>CSDN @金子711</Watermark>
    </Page>
  );
};

export default App;
